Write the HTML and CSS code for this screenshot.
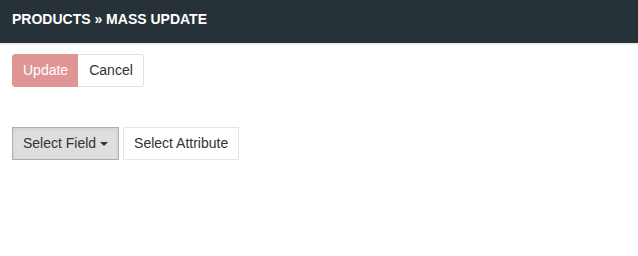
FILE: index.html
```html
<!DOCTYPE html>
<html>
<head>
<meta charset="utf-8">
<link rel="stylesheet" href="styles.css">
</head>
<body>
<header class="topbar">PRODUCTS » MASS UPDATE</header>
<main class="content">
  <div class="btn-group">
    <button class="btn btn-update">Update</button><button class="btn btn-cancel">Cancel</button>
  </div>
  <div class="row-fields">
    <button class="btn btn-active">Select Field <span class="caret"></span></button>
    <button class="btn btn-plain">Select Attribute</button>
  </div>
</main>
</body>
</html>
```
FILE: styles.css
```css
* { box-sizing: border-box; }
html, body { margin: 0; padding: 0; background: #fff; }
body { font-family: "Liberation Sans", Arial, sans-serif; font-size: 14px; color: #333; }
.topbar {
  height: 43px;
  background: #263238;
  color: #fff;
  font-weight: bold;
  font-size: 14px;
  line-height: 20px;
  padding: 9px 12px;
  box-shadow: 0 1px 2px rgba(0,0,0,0.15);
}
.content { padding: 11px 12px; }
.btn-group { display: flex; }
.btn {
  font-family: inherit;
  font-size: 14px;
  line-height: 19px;
  padding: 6px 10px;
  border: 1px solid #e3e3e3;
  background: #fff;
  color: #333;
  margin: 0;
  border-radius: 3px;
}
.btn-update {
  background: #e09595;
  border-color: #e09595;
  color: #fff;
  border-radius: 3px 0 0 3px;
  padding: 6px 9px 6px 10px;
  width: 66px;
}
.btn-cancel { border-radius: 0 3px 3px 0; border-left: none; padding-left: 11px; width: 66px; }
.row-fields { margin-top: 40px; display: flex; gap: 4px; }
.btn-active {
  background: #dedede;
  border-color: #adadad;
  border-radius: 0;
  box-shadow: inset 0 2px 4px rgba(0,0,0,0.06);
}
.btn-plain { border-color: #e6e6e6; border-radius: 0; }
.caret {
  display: inline-block;
  width: 0; height: 0;
  border-top: 4px solid #333;
  border-left: 4px solid transparent;
  border-right: 4px solid transparent;
  vertical-align: middle;
  margin-left: 0;
}
```
